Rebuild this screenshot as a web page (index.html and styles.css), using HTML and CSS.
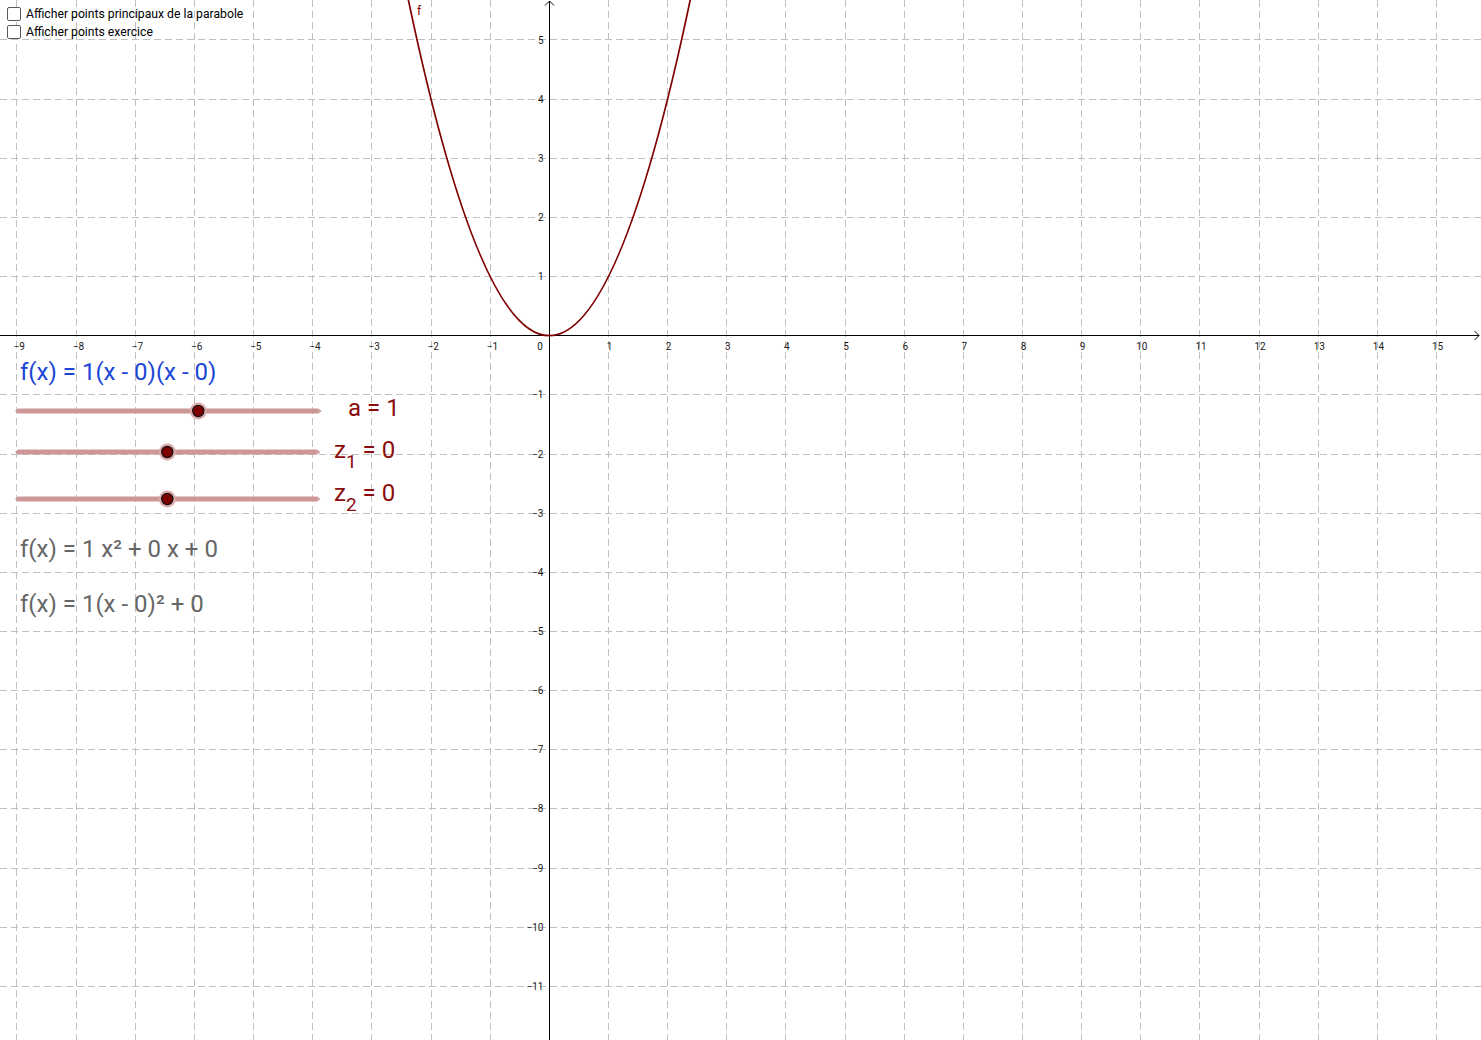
FILE: index.html
```html
<!DOCTYPE html>
<html lang="fr">
<head>
<meta charset="utf-8">
<title>Parabole</title>
<link rel="stylesheet" href="styles.css">
</head>
<body>
<div class="stage">
  <svg class="graph" width="1481" height="1040" viewBox="0 0 1481 1040">
    <path class="grid" d="M16.5 0V1040M76.5 0V1040M135.5 0V1040M194.5 0V1040M253.5 0V1040M312.5 0V1040M371.5 0V1040M431.5 0V1040M490.5 0V1040M608.5 0V1040M667.5 0V1040M726.5 0V1040M785.5 0V1040M845.5 0V1040M904.5 0V1040M963.5 0V1040M1022.5 0V1040M1081.5 0V1040M1140.5 0V1040M1199.5 0V1040M1259.5 0V1040M1318.5 0V1040M1377.5 0V1040M1436.5 0V1040"/>
    <path class="grid" d="M0 39.5H1481M0 99.5H1481M0 158.5H1481M0 217.5H1481M0 276.5H1481M0 394.5H1481M0 454.5H1481M0 513.5H1481M0 572.5H1481M0 631.5H1481M0 690.5H1481M0 749.5H1481M0 808.5H1481M0 868.5H1481M0 927.5H1481M0 986.5H1481"/>
    <path class="axis" d="M0 335.5H1479M1474.5 331L1479 335.5L1474.5 340M549.5 1040V1M545 5.5L549.5 1L554 5.5"/>
    <g class="xlab">
      <text x="19.3" y="349.5">−9</text>
      <text x="78.4" y="349.5">−8</text>
      <text x="137.5" y="349.5">−7</text>
      <text x="196.7" y="349.5">−6</text>
      <text x="255.8" y="349.5">−5</text>
      <text x="315" y="349.5">−4</text>
      <text x="374.1" y="349.5">−3</text>
      <text x="433.3" y="349.5">−2</text>
      <text x="492.4" y="349.5">−1</text>
      <text x="540" y="349.5">0</text>
      <text x="609.5" y="349.5">1</text>
      <text x="668.6" y="349.5">2</text>
      <text x="727.8" y="349.5">3</text>
      <text x="786.9" y="349.5">4</text>
      <text x="846" y="349.5">5</text>
      <text x="905.2" y="349.5">6</text>
      <text x="964.4" y="349.5">7</text>
      <text x="1023.5" y="349.5">8</text>
      <text x="1082.6" y="349.5">9</text>
      <text x="1141.8" y="349.5">10</text>
      <text x="1201" y="349.5">11</text>
      <text x="1260.1" y="349.5">12</text>
      <text x="1319.3" y="349.5">13</text>
      <text x="1378.4" y="349.5">14</text>
      <text x="1437.5" y="349.5">15</text>
    </g>
    <g class="ylab">
      <text x="543.5" y="43.5">5</text>
      <text x="543.5" y="102.6">4</text>
      <text x="543.5" y="161.8">3</text>
      <text x="543.5" y="220.9">2</text>
      <text x="543.5" y="280">1</text>
      <text x="543.5" y="398.4">−1</text>
      <text x="543.5" y="457.5">−2</text>
      <text x="543.5" y="516.7">−3</text>
      <text x="543.5" y="575.8">−4</text>
      <text x="543.5" y="635">−5</text>
      <text x="543.5" y="694.1">−6</text>
      <text x="543.5" y="753.3">−7</text>
      <text x="543.5" y="812.4">−8</text>
      <text x="543.5" y="871.6">−9</text>
      <text x="543.5" y="930.7">−10</text>
      <text x="543.5" y="989.9">−11</text>
    </g>
    <path class="curve" d="M407.34 -5 Q549.3 676.4 691.26 -5"/>
    <text class="flabel" x="417" y="15">f</text>
  </svg>

  <div class="overlay">
    <div class="checks">
      <label class="check"><span class="box"></span>Afficher points principaux de la parabole</label>
      <label class="check"><span class="box"></span>Afficher points exercice</label>
    </div>

    <div class="f-blue">f(x) = 1(x - 0)(x - 0)</div>

    <div class="slider-row row-a">
      <svg class="slider" width="320" height="30" viewBox="0 0 320 30">
        <path class="track" d="M10 15H310.5"/>
        <path class="tip" d="M10 12.5L7 15L10 17.5ZM310.5 12.5L313.7 15L310.5 17.5Z"/>
        <circle class="halo" cx="190.3" cy="15" r="8.5"/>
        <circle class="knob" cx="190.3" cy="15" r="5.6"/>
      </svg>
      <span class="val val-a">a = 1</span>
    </div>

    <div class="slider-row row-z1">
      <svg class="slider" width="320" height="30" viewBox="0 0 320 30">
        <path class="track" d="M10 15H309.3"/>
        <path class="tip" d="M10 12.5L7 15L10 17.5ZM309.3 12.5L312.3 15L309.3 17.5Z"/>
        <circle class="halo" cx="159.3" cy="15" r="8.5"/>
        <circle class="knob" cx="159.3" cy="15" r="5.6"/>
      </svg>
      <span class="val val-z val-mid">z<sub>1</sub> = 0</span>
    </div>

    <div class="slider-row row-z2">
      <svg class="slider" width="320" height="30" viewBox="0 0 320 30">
        <path class="track" d="M10 15H309.3"/>
        <path class="tip" d="M10 12.5L7 15L10 17.5ZM309.3 12.5L312.3 15L309.3 17.5Z"/>
        <circle class="halo" cx="159.3" cy="15" r="8.5"/>
        <circle class="knob" cx="159.3" cy="15" r="5.6"/>
      </svg>
      <span class="val val-z val-low">z<sub>2</sub> = 0</span>
    </div>

    <div class="f-grey f-grey-1">f(x) = 1 x² + 0 x + 0</div>
    <div class="f-grey f-grey-2">f(x) = 1(x - 0)² + 0</div>
  </div>
</div>
</body>
</html>
```

FILE: styles.css
```css
html, body {
  margin: 0;
  padding: 0;
  background: #ffffff;
}

body {
  overflow: hidden;
  font-family: Roboto, "Noto Sans", sans-serif;
}

.stage {
  position: relative;
  width: 1481px;
  height: 1040px;
  overflow: hidden;
  background: #ffffff;
}

.graph {
  position: absolute;
  left: 0;
  top: 0;
  display: block;
}

.grid {
  fill: none;
  stroke: #c0c0c0;
  stroke-width: 1;
  stroke-dasharray: 7 4;
  shape-rendering: crispEdges;
}

.axis {
  fill: none;
  stroke: #000000;
  stroke-width: 1;
}

.xlab text,
.ylab text {
  font-family: Roboto, "DejaVu Sans", sans-serif;
  font-size: 10px;
  fill: #1a1a1a;
}

.xlab text {
  text-anchor: middle;
}

.ylab text {
  text-anchor: end;
}

.curve {
  fill: none;
  stroke: #800000;
  stroke-width: 1.7;
}

.flabel {
  font-family: Roboto, sans-serif;
  font-size: 12px;
  fill: #800000;
}

/* overlay content */
.overlay {
  position: absolute;
  inset: 0;
  font-family: Roboto, "Noto Sans", sans-serif;
}

.checks {
  padding: 5px 0 0 7px;
}

.check {
  display: flex;
  align-items: center;
  gap: 5px;
  height: 18px;
  font-size: 12.2px;
  color: #000000;
}

.box {
  width: 12px;
  height: 12px;
  border: 1px solid #5a5a5a;
  border-radius: 2px;
  background: #ffffff;
  flex: none;
}

.f-blue {
  margin: 316px 0 0 20px;
  height: 30px;
  font-size: 24px;
  line-height: 30px;
  color: #1b45d4;
  white-space: nowrap;
}

.slider-row {
  display: flex;
  align-items: flex-start;
  height: 30px;
  margin-left: 8px;
}

.row-a { margin-top: 9px; }
.row-z1 { margin-top: 11px; }
.row-z2 { margin-top: 17px; }

.slider {
  display: block;
  flex: none;
}

.track {
  fill: none;
  stroke: #cd9797;
  stroke-width: 5;
}

.tip {
  fill: #cd9797;
}

.halo {
  fill: #dcaaaa;
}

.knob {
  fill: #7d0000;
  stroke: #111111;
  stroke-width: 1.2;
}

.val {
  font-size: 24px;
  line-height: 25px;
  color: #8a0c0c;
  white-space: nowrap;
}

.val-a { margin-left: 20px; }
.val-z { margin-left: 6px; }
.val-mid { line-height: 26px; }
.val-low { line-height: 19px; }

.val sub {
  font-size: 19px;
  line-height: 0;
  vertical-align: -10px;
}

.f-grey {
  height: 30px;
  margin-left: 20px;
  font-size: 24px;
  line-height: 30px;
  color: #666666;
  white-space: nowrap;
}

.f-grey-1 { margin-top: 19.5px; }
.f-grey-2 { margin-top: 25.3px; }
```
